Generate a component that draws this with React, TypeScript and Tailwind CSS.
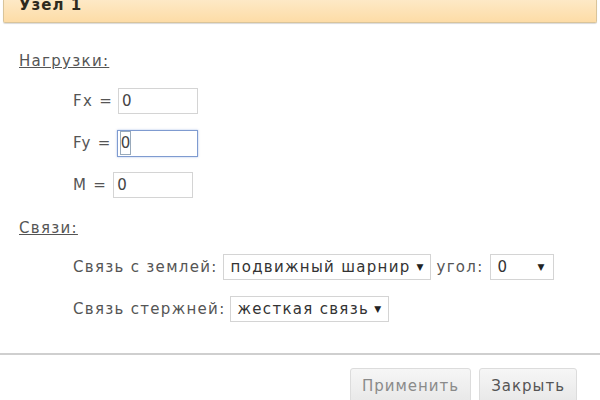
import React from "react";

const font = { fontFamily: '"DejaVu Sans", Verdana, sans-serif' };

function Arrow() {
  return <span className="text-[9px] leading-none text-[#222] tracking-normal">▼</span>;
}

export default function App() {
  return (
    <div className="w-[600px] h-[400px] bg-white overflow-hidden text-[#555] relative" style={font}>
      <div className="mx-[3px] h-[23px] rounded-b-[2px] border-l border-r border-b border-[#d9c49a] bg-gradient-to-b from-[#fde9c6] to-[#fddca6] shadow-[0_1px_1px_rgba(0,0,0,0.15)] overflow-hidden">
        <div className="pl-[15px] -mt-[5px] text-[15px] font-bold tracking-[1px] text-[#2e2a1e] leading-[20px]">Узел 1</div>
      </div>

      <div className="pl-[19px] pt-[29px] text-[15px] tracking-[1.3px]">
        <div className="underline leading-[18px]">Нагрузки:</div>
        <div className="pl-[54px] pt-[18px] flex flex-col gap-[16px]">
          <div className="flex items-center h-[26px]">
            <span>Fx =</span>
            <div className="ml-[5px] w-[80px] h-[26px] border border-[#d4d4d4] flex items-center pl-[3px] text-[#444]">0</div>
          </div>
          <div className="flex items-center h-[26px]">
            <span>Fy =</span>
            <div className="ml-[5px] w-[81px] h-[27px] border border-[#7f9bd0] shadow-[0_0_2px_rgba(90,130,210,0.5)] flex items-center pl-[3px] text-[#444]">
              <span className="outline outline-1 outline-[#9ab] tracking-normal">0</span>
            </div>
          </div>
          <div className="flex items-center h-[26px]">
            <span>M =</span>
            <div className="ml-[6px] w-[80px] h-[26px] border border-[#d4d4d4] flex items-center pl-[3px] text-[#444]">0</div>
          </div>
        </div>

        <div className="underline leading-[18px] mt-[21px]">Связи:</div>
        <div className="pl-[54px] pt-[17px] flex flex-col gap-[16px]">
          <div className="flex items-center h-[26px]">
            <span>Связь с землей:</span>
            <div className="ml-[5px] h-[26px] border border-[#d4d4d4] flex items-center pl-[7px] pr-[7px] gap-[6px] text-[#333]">
              <span>подвижный шарнир</span>
              <Arrow />
            </div>
            <span className="ml-[5px]">угол:</span>
            <div className="ml-[6px] w-[64px] h-[26px] border border-[#d4d4d4] flex items-center justify-between pl-[7px] pr-[8px] text-[#333]">
              <span>0</span>
              <Arrow />
            </div>
          </div>
          <div className="flex items-center h-[26px]">
            <span>Связь стержней:</span>
            <div className="ml-[4px] h-[26px] border border-[#d4d4d4] flex items-center pl-[7px] pr-[7px] gap-[5px] text-[#333]">
              <span>жесткая связь</span>
              <Arrow />
            </div>
          </div>
        </div>
      </div>

      <div className="absolute left-0 right-0 top-[353px] h-[2px] bg-[#cfcfcf]" />
      <div className="absolute right-[23px] top-[368px] flex gap-[8px] text-[15px] tracking-[1px]">
        <div className="h-[40px] px-[11px] pt-[6px] rounded-[3px] border border-[#dcdcdc] bg-gradient-to-b from-[#f6f6f6] to-[#e6e6e6] text-[#8a8a8a]">Применить</div>
        <div className="h-[40px] px-[11px] pt-[6px] rounded-[3px] border border-[#dcdcdc] bg-gradient-to-b from-[#f6f6f6] to-[#e6e6e6] text-[#555]">Закрыть</div>
      </div>
    </div>
  );
}
